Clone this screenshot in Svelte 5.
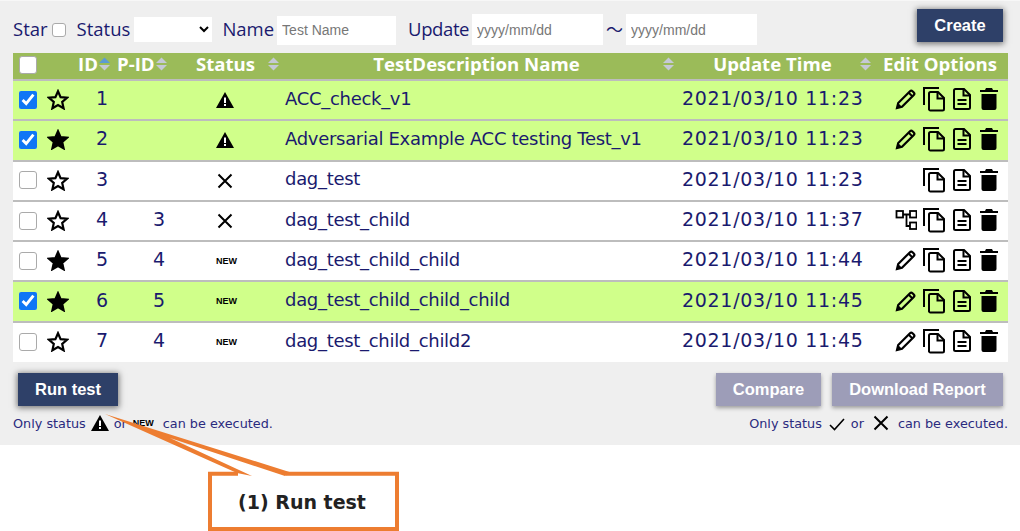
<script lang="ts">
  type Row = {
    id: number;
    parent?: number;
    checked: boolean;
    starred: boolean;
    status: 'warn' | 'fail' | 'new';
    name: string;
    time: string;
    edit: 'pencil' | 'tree' | 'none';
  };

  const rows: Row[] = [
    { id: 1, checked: true, starred: false, status: 'warn', name: 'ACC_check_v1', time: '2021/03/10 11:23', edit: 'pencil' },
    { id: 2, checked: true, starred: true, status: 'warn', name: 'Adversarial Example ACC testing Test_v1', time: '2021/03/10 11:23', edit: 'pencil' },
    { id: 3, checked: false, starred: false, status: 'fail', name: 'dag_test', time: '2021/03/10 11:23', edit: 'none' },
    { id: 4, parent: 3, checked: false, starred: false, status: 'fail', name: 'dag_test_child', time: '2021/03/10 11:37', edit: 'tree' },
    { id: 5, parent: 4, checked: false, starred: true, status: 'new', name: 'dag_test_child_child', time: '2021/03/10 11:44', edit: 'pencil' },
    { id: 6, parent: 5, checked: true, starred: true, status: 'new', name: 'dag_test_child_child_child', time: '2021/03/10 11:45', edit: 'pencil' },
    { id: 7, parent: 4, checked: false, starred: false, status: 'new', name: 'dag_test_child_child2', time: '2021/03/10 11:45', edit: 'pencil' }
  ];
</script>

{#snippet sorter(active = false)}
  <svg class="sorter" viewBox="0 0 11 14" width="11" height="14">
    <path d="M5.5 0.5L11 6H0z" fill={active ? '#5b9bd5' : '#c5c9d6'} />
    <path d="M5.5 13.5L11 8H0z" fill="#c5c9d6" />
  </svg>
{/snippet}

{#snippet warn(size = 18)}
  <svg viewBox="0 0 18 16" width={size} height={size * 16 / 18}>
    <path d="M9 0L18 16H0z" fill="#000" />
    <rect x="8" y="5.5" width="2" height="5.5" fill="#fff" />
    <rect x="8" y="12" width="2" height="2" fill="#fff" />
  </svg>
{/snippet}

{#snippet cross(size = 16)}
  <svg viewBox="0 0 16 16" width={size} height={size}>
    <path d="M1.5 1.5L14.5 14.5M14.5 1.5L1.5 14.5" stroke="#000" stroke-width="2" fill="none" />
  </svg>
{/snippet}

<div class="page">
  <div class="filters">
    <label class="f-star">Star <input type="checkbox" /></label>
    <label class="f-status">Status <select><option></option></select></label>
    <label class="f-name">Name <input class="text name" placeholder="Test Name" /></label>
    <label class="f-update">Update <input class="text date" placeholder="yyyy/mm/dd" /></label>
    <span class="tilde">〜</span>
    <input class="text date" placeholder="yyyy/mm/dd" />
    <button class="btn primary create">Create</button>
  </div>

  <table>
    <thead>
      <tr>
        <th class="c-check"><input type="checkbox" /></th>
        <th class="c-star"></th>
        <th class="c-id"><span class="head">ID{@render sorter(true)}</span></th>
        <th class="c-pid"><span class="head">P-ID{@render sorter()}</span></th>
        <th class="c-status"><span class="head spread">Status{@render sorter()}</span></th>
        <th class="c-name"><span class="head spread"><span class="grow">TestDescription Name</span>{@render sorter()}</span></th>
        <th class="c-time"><span class="head spread"><span class="grow">Update Time</span>{@render sorter()}</span></th>
        <th class="c-edit">Edit Options</th>
      </tr>
    </thead>
    <tbody>
      {#each rows as row (row.id)}
        <tr class:selected={row.checked}>
          <td class="c-check"><input type="checkbox" checked={row.checked} /></td>
          <td class="c-star">
            <svg viewBox="0 0 22 21" width="22" height="21">
              <path
                d="M11 2.2L13.6 8.1L20 8.7L15.2 13L16.6 19.3L11 16L5.4 19.3L6.8 13L2 8.7L8.4 8.1z"
                fill={row.starred ? '#000' : 'none'}
                stroke="#000"
                stroke-width="2.2"
              />
            </svg>
          </td>
          <td class="c-id">{row.id}</td>
          <td class="c-pid">{row.parent ?? ''}</td>
          <td class="c-status">
            {#if row.status === 'warn'}
              {@render warn()}
            {:else if row.status === 'fail'}
              <span class="fail">{@render cross()}</span>
            {:else}
              <span class="new">NEW</span>
            {/if}
          </td>
          <td class="c-name">{row.name}</td>
          <td class="c-time">{row.time}</td>
          <td class="c-edit">
            <div class="tools">
              {#if row.edit === 'pencil'}
                <svg viewBox="0 0 22 22" width="22" height="22">
                  <path d="M2 20l1.2-5L15 3.2a1.8 1.8 0 0 1 2.5 0l1.3 1.300a1.800 1.800 0 0 1 0 2.500L7 18.800z" fill="none" stroke="#000" stroke-width="2.200" />
                  <path d="M13.500 4.500l4 4" stroke="#000" stroke-width="2" />
                  <path d="M1.500 20.500l1.600-5.600 4 4z" fill="#000" />
                </svg>
              {:else if row.edit === 'tree'}
                <svg viewBox="0 0 22 22" width="22" height="22">
                  <g fill="none" stroke="#000" stroke-width="1.800">
                    <rect x="1.500" y="2" width="6.500" height="6.500" />
                    <rect x="15" y="2" width="6.500" height="6.500" />
                    <rect x="15" y="13.500" width="6.500" height="6.500" />
                    <path d="M8 5.500h7M11.500 5.500v11.500H15" />
                  </g>
                </svg>
              {:else}
                <span class="tool-gap"></span>
              {/if}
              <svg class="copy" viewBox="0 0 24 26" width="24" height="26">
                <g fill="none" stroke="#000" stroke-width="2">
                  <path d="M2 19V2h15" />
                  <path d="M7 7.500a1.500 1.500 0 0 1 1.500-1.500H16l6 6v11a1.500 1.500 0 0 1-1.500 1.500H8.500A1.500 1.500 0 0 1 7 23.500z" />
                  <path d="M15.500 6v6.500H22" />
                </g>
              </svg>
              <svg class="file" viewBox="0 0 20 24" width="20" height="24">
                <g fill="none" stroke="#000" stroke-width="2">
                  <path d="M2 3.500A1.500 1.500 0 0 1 3.500 2H12l6 6v12.500a1.500 1.500 0 0 1-1.500 1.500h-13A1.500 1.500 0 0 1 2 20.500z" />
                  <path d="M11.500 2v6.500H18M5.500 13h9M5.500 17h9" />
                </g>
              </svg>
              <svg class="trash" viewBox="0 0 18 22" width="18" height="22">
                <path d="M6 0h6l1 2h5v2H0V2h5zM1.500 6h15v14a2 2 0 0 1-2 2h-11a2 2 0 0 1-2-2z" fill="#000" />
              </svg>
            </div>
          </td>
        </tr>
      {/each}
    </tbody>
  </table>

  <div class="actions">
    <button class="btn primary">Run test</button>
    <div class="actions-right">
      <button class="btn muted compare">Compare</button>
      <button class="btn muted report">Download Report</button>
    </div>
  </div>

  <div class="notes">
    <p>Only status <span class="note-icon">{@render warn(18)}</span> or <span class="new small">NEW</span> can be executed.</p>
    <p>
      Only status
      <svg class="note-icon check" viewBox="0 0 16 14" width="16" height="14"><path d="M1 8l4.500 4.500L15 2" stroke="#000" stroke-width="1.600" fill="none" /></svg>
      or
      <span class="note-icon x">{@render cross(16)}</span>
      can be executed.
    </p>
  </div>
</div>

<svg class="callout" width="1020" height="531" viewBox="0 0 1020 531">
  <rect x="210" y="474" width="187" height="55" fill="#fff" />
  <path d="M105 414L291 472.500L285 476L170 438L252 476L237 473z" fill="#ed7d31" />
  <path d="M238 473.700H210V529H397V473.700H286" fill="none" stroke="#ed7d31" stroke-width="4" />
  <text x="302" y="509" text-anchor="middle">(1) Run test</text>
</svg>

<style>
  :global(body) {
    margin: 0;
    background: #fff;
    font-family: 'DejaVu Sans', sans-serif;
  }

  .page {
    box-sizing: border-box;
    height: 445px;
    width: 1020px;
    padding: 0 12px 0 13px;
    background: #efefef;
    color: #1a1a6e;
    border-top: 1px solid #f7f7f7;
  }

  input[type='checkbox'] {
    accent-color: #0f76f5;
  }

  input[type='checkbox']:not(:checked) {
    appearance: none;
    box-sizing: border-box;
    background: #fff;
    border: 1.5px solid #aaa;
    border-radius: 3px;
  }

  .filters {
    box-sizing: border-box;
    display: flex;
    align-items: center;
    height: 52px;
    padding-top: 3px;
    font-size: 18.500px;
    font-family: 'Open Sans', sans-serif;
    color: #1a1a6e;
  }

  .filters label {
    display: flex;
    align-items: center;
    gap: 3px;
  }

  .f-star input {
    width: 14px;
    height: 14px;
    margin: 2px 0 0 1px;
  }

  .f-status {
    margin-left: 11px;
  }

  .f-status select {
    width: 78px;
    height: 25px;
    margin: 2px 0 0 1px;
    border: none;
    background: #fff;
    font-size: 13px;
  }

  .f-name {
    margin-left: 10px;
  }

  .f-update {
    margin-left: 12px;
    letter-spacing: -0.400px;
  }

  .text {
    box-sizing: border-box;
    height: 31px;
    margin-top: 2px;
    border: none;
    background: #fff;
    padding: 0 5px;
    font-family: 'Liberation Sans', sans-serif;
    font-size: 14px;
    letter-spacing: 0;
  }

  .text::placeholder {
    color: #777;
  }

  .name {
    width: 119px;
    height: 29px;
    margin-top: 3px;
  }

  .date {
    width: 131px;
  }

  .tilde {
    width: 23px;
    text-align: center;
    font-family: 'Noto Sans CJK JP', sans-serif;
    font-size: 17px;
    line-height: 1;
  }

  .btn {
    box-sizing: border-box;
    border: none;
    color: #fff;
    font-family: 'Liberation Sans', sans-serif;
    font-weight: 700;
    font-size: 16.500px;
    height: 33px;
    box-shadow: 0 1px 6px 1px rgba(0, 0, 0, 0.5);
  }

  .primary {
    width: 100px;
    background: #2e4068;
  }

  .create {
    width: 86px;
    margin: -6px 5px 0 auto;
  }

  .muted {
    background: #9d9db8;
    box-shadow: 0 2px 4px rgba(0, 0, 0, 0.35);
  }

  .compare {
    width: 105px;
  }

  .report {
    width: 171px;
  }

  table {
    width: 995px;
    table-layout: fixed;
    border-collapse: collapse;
    font-size: 19px;
  }

  thead tr {
    height: 27px;
    background: #9bbb59;
    color: #fff;
  }

  th {
    box-sizing: border-box;
    padding: 0 0 4px;
    font-size: 18.600px;
    line-height: 22px;
    font-weight: 700;
    text-align: left;
    font-family: 'Open Sans', sans-serif;
  }

  tbody tr {
    height: 40.300px;
    background: #fff;
    border-top: 2px solid #bdbdbd;
  }

  tbody tr.selected {
    background: #d0ff8a;
  }

  td {
    padding: 0;
    color: #1a1a6e;
    white-space: nowrap;
  }

  .c-check {
    width: 31px;
    text-align: center;
  }

  th.c-check {
    padding-bottom: 2px;
  }

  .c-check input {
    display: block;
    width: 18px;
    height: 18px;
    margin: 0 0 0 6px;
  }

  td.c-check,
  td.c-star {
    padding-bottom: 1px;
  }

  .c-star {
    width: 34px;
  }

  .c-star svg {
    display: block;
    margin-left: 3px;
  }

  .c-id {
    width: 39px;
  }

  td.c-id {
    padding: 0 0 4px 18px;
  }

  .c-pid {
    width: 62px;
  }

  td.c-pid {
    padding: 0 0 4px 36px;
  }

  .c-status {
    width: 106px;
  }

  td.c-status {
    padding: 0 0 0 37px;
    line-height: 0;
  }

  th.c-status {
    padding-left: 17px;
  }

  th.c-status .head {
    padding-right: 6px;
  }

  .fail {
    display: inline-block;
    margin-left: 1px;
  }

  .c-name {
    width: 397px;
  }

  td.c-name {
    padding: 0 0 4px;
    font-size: 18px;
    letter-spacing: -0.300px;
  }

  th.c-name .head {
    padding: 0 8px 0 6px;
  }

  .c-time {
    width: 198px;
  }

  td.c-time {
    padding-bottom: 4px;
    letter-spacing: 0.700px;
  }

  th.c-time .head {
    padding: 0 9px 0 4px;
  }

  .c-edit {
    width: 128px;
  }

  th.c-edit {
    padding-left: 3px;
  }

  td.c-edit {
    padding-bottom: 2px;
  }

  .head {
    display: flex;
    align-items: center;
    gap: 1px;
  }

  .spread {
    justify-content: space-between;
  }

  .grow {
    flex: 1;
    text-align: center;
  }

  .sorter {
    flex: none;
  }

  .tools {
    display: flex;
    align-items: center;
    justify-content: flex-end;
    padding-right: 10px;
  }

  .copy {
    margin-left: 5px;
  }

  .file {
    margin-left: 6px;
  }

  .trash {
    margin-left: 8px;
  }

  .tool-gap {
    width: 22px;
  }

  .new {
    font-family: 'Liberation Sans', sans-serif;
    font-weight: 700;
    font-size: 9px;
    line-height: 1;
    color: #000;
  }

  .small {
    margin: 0 4px 0 1px;
  }

  .actions {
    display: flex;
    justify-content: space-between;
    margin-top: 11px;
    padding: 0 5px;
  }

  .actions-right {
    display: flex;
    gap: 11px;
  }

  .notes {
    display: flex;
    justify-content: space-between;
    margin-top: 9px;
    font-size: 12.800px;
    color: #2a2a7e;
  }

  .notes p {
    margin: 0;
    display: flex;
    align-items: center;
    gap: 5px;
  }

  .note-icon {
    display: inline-flex;
  }

  .check {
    margin: 2px 1px 0 2px;
  }

  .x {
    margin: 0 4px;
  }

  .callout {
    position: absolute;
    left: 0;
    top: 0;
    pointer-events: none;
  }

  .callout text {
    font-family: 'DejaVu Sans', sans-serif;
    font-weight: 700;
    font-size: 19px;
    fill: #222;
  }
</style>
